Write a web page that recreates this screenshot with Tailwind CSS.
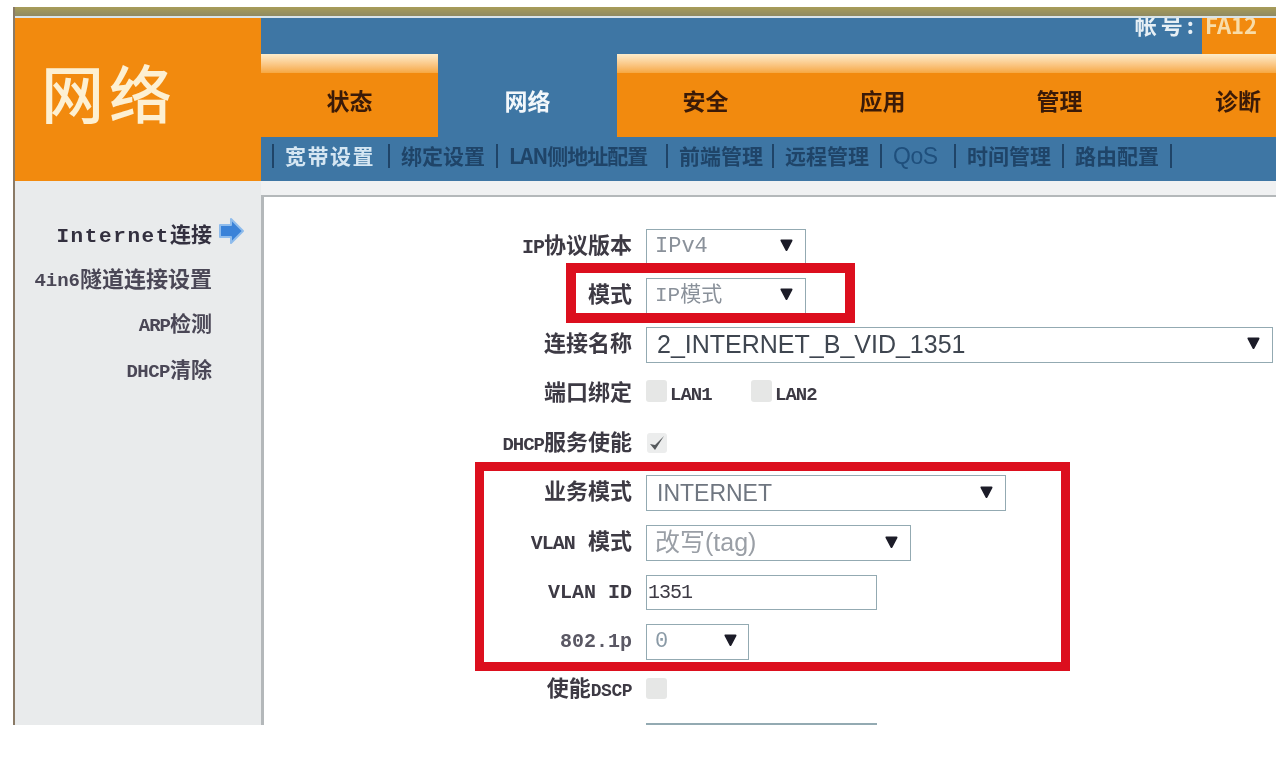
<!DOCTYPE html>
<html lang="zh">
<head>
  <meta charset="UTF-8" />
  <title>网络</title>
  <script src="https://cdn.jsdelivr.net/npm/@tailwindcss/browser@4"></script>
</head>
<body class="bg-white overflow-hidden font-['Liberation_Mono','Noto_Sans_CJK_SC',monospace]">
  <svg class="hidden">
    <symbol id="caret" viewBox="0 0 13 13"><path d="M1.5 2.5h10l-5 9.5z" fill="#1c1c28" stroke="#1c1c28" stroke-width="2" stroke-linejoin="round"/></symbol>
  </svg>
  <div class="relative w-[1280px] h-[780px] pt-[7px] pl-[13px] overflow-hidden">
    <div class="w-[1263px] h-[718px] flex flex-col border-l-2 border-[#8a7a66] blur-[0.6px]">
      <!-- top strip -->
      <div class="h-[9px] shrink-0 bg-linear-to-b from-[#a89c58] to-[#8f8a62]"></div>
      <div class="h-[2px] shrink-0 bg-[#d9e4ea]"></div>

      <!-- header -->
      <div class="h-[163px] shrink-0 flex">
        <div class="w-[246px] shrink-0 bg-[#f28a0e] flex items-center pl-[26px] pb-[18px]">
          <span class="text-[63px] leading-none tracking-[5px] font-medium text-[#fdf0d2] font-['Noto_Sans_CJK_SC',sans-serif]">网络</span>
        </div>
        <div class="flex-1 min-w-0 flex flex-col bg-[#3e76a4] overflow-hidden">
          <div class="h-[36px] shrink-0 flex justify-end overflow-hidden">
            <span class="text-[22px] leading-none font-bold tracking-[4px] text-[#e6eff5] mr-[4px] mt-[-5px] font-['Noto_Sans_CJK_SC',sans-serif]">帐号:</span>
            <div class="w-[74px] bg-[#f28a0e] pl-[3px] text-[22px] leading-none font-bold text-[#f8dca8] font-['Noto_Sans_CJK_SC',sans-serif]"><span class="block mt-[-5px]">FA12</span></div>
          </div>
          <div class="h-[83px] shrink-0 flex text-[23px] font-bold font-['Noto_Sans_CJK_SC',sans-serif]">
            <div class="w-[177px] shrink-0 flex flex-col bg-[#f28a0e]">
              <div class="h-[19px] bg-linear-to-b from-[#fdeccb] to-[#f6a840]"></div>
              <div class="flex-1 flex items-center justify-center pb-[10px] text-[#3a1a08]">状态</div>
            </div>
            <div class="w-[179px] shrink-0 flex flex-col">
              <div class="h-[19px]"></div>
              <div class="flex-1 flex items-center justify-center pb-[10px] text-[#f2f7fb]">网络</div>
            </div>
            <div class="flex-1 min-w-0 flex flex-col bg-[#f28a0e]">
              <div class="h-[19px] bg-linear-to-b from-[#fdeccb] to-[#f6a840]"></div>
              <div class="flex-1 flex items-center pb-[10px] text-[#3a1a08]">
                <span class="w-[177px] shrink-0 text-center">安全</span>
                <span class="w-[177px] shrink-0 text-center">应用</span>
                <span class="w-[177px] shrink-0 text-center">管理</span>
                <span class="w-[180px] shrink-0 text-center whitespace-nowrap">诊断</span>
              </div>
            </div>
          </div>
          <div class="flex-1 flex items-center pl-[11px] pb-[6px] gap-[11px] text-[21px] font-bold text-[#1f4468] whitespace-nowrap font-['Noto_Sans_CJK_SC',sans-serif]">
            <i class="w-[2px] h-[24px] bg-[#1f4468]"></i>
            <span class="text-[#d5e6f2] w-[92px] tracking-[1.5px]">宽带设置</span>
            <i class="w-[2px] h-[24px] bg-[#1f4468]"></i>
            <span class="w-[84px]">绑定设置</span>
            <i class="w-[2px] h-[24px] bg-[#1f4468]"></i>
            <span class="w-[146px] tracking-[-1px]">LAN侧地址配置</span>
            <i class="w-[2px] h-[24px] bg-[#1f4468]"></i>
            <span class="w-[82px]">前端管理</span>
            <i class="w-[2px] h-[24px] bg-[#1f4468]"></i>
            <span class="w-[84px]">远程管理</span>
            <i class="w-[2px] h-[24px] bg-[#1f4468]"></i>
            <span class="w-[50px] font-normal text-[23px] tracking-[-0.5px] text-[#1f4f7c] font-['Liberation_Sans',sans-serif]">QoS</span>
            <i class="w-[2px] h-[24px] bg-[#1f4468]"></i>
            <span class="w-[84px]">时间管理</span>
            <i class="w-[2px] h-[24px] bg-[#1f4468]"></i>
            <span class="w-[84px]">路由配置</span>
            <i class="w-[2px] h-[24px] bg-[#1f4468]"></i>
          </div>
        </div>
      </div>

      <!-- body -->
      <div class="flex-1 min-h-0 flex">
        <aside class="w-[246px] shrink-0 bg-[#e9ebec] pt-[36px] flex flex-col items-end pr-[49px] text-[21px] font-bold text-[#33303f] whitespace-nowrap">
          <div class="h-[40px] flex items-center relative">
            <span class="tracking-[1.6px]">Internet</span>连接
            <svg class="absolute left-full ml-[6px] top-[0px]" width="27" height="28" viewBox="0 0 27 28">
              <path d="M2 8h11V2l12 12-12 12v-6H2z" fill="#3a82d8" stroke="#8fbcec" stroke-width="2" stroke-linejoin="round"/>
            </svg>
          </div>
          <div class="h-[48px] flex items-center text-[22px] text-[#4a4756]"><span class="text-[19px]">4in6</span>隧道连接设置</div>
          <div class="h-[42px] flex items-center text-[#4a4756]"><span class="text-[19px] tracking-[-1px]">ARP</span>检测</div>
          <div class="h-[50px] flex items-center text-[#4a4756]"><span class="text-[19px] tracking-[-0.5px]">DHCP</span>清除</div>
        </aside>

        <main class="flex-1 min-w-0 flex flex-col bg-[#f0f1f2] overflow-hidden">
          <div class="h-[14px] shrink-0"></div>
          <div class="flex-1 min-h-0 bg-white border-t-[2px] border-l-[3px] border-[#b4b8ba] pt-[25px] pl-[368px] text-[22px] font-bold text-[#3d3a44]">

            <div class="h-[49px] flex items-center">
              <label class="w-[250px] -ml-[250px] mt-[2px] text-right"><span class="text-[20px] tracking-[-1px]">IP</span>协议版本</label>
              <div class="ml-[14px] w-[160px] h-[36px] border border-[#93aab2] flex items-center justify-between pl-[8px] pr-[12px] font-normal text-[#8a919a]"><span>IPv4</span><svg class="w-[13px] h-[13px] mb-[4px]"><use href="#caret"/></svg></div>
            </div>
            <div class="h-[49px] flex items-center">
              <label class="w-[250px] -ml-[250px] mt-[2px] text-right">模式</label>
              <div class="ml-[14px] w-[160px] h-[36px] border border-[#93aab2] flex items-center justify-between pl-[8px] pr-[12px] font-normal text-[21px] text-[#8a919a]"><span>IP模式</span><svg class="w-[13px] h-[13px] mb-[4px]"><use href="#caret"/></svg></div>
            </div>
            <div class="h-[49px] flex items-center">
              <label class="w-[250px] -ml-[250px] mt-[2px] text-right">连接名称</label>
              <div class="ml-[14px] w-[627px] h-[36px] border border-[#93aab2] flex items-center justify-between pl-[10px] pr-[12px] font-normal text-[25px] text-[#3f4650] font-['Liberation_Sans',sans-serif]"><span>2_INTERNET_B_VID_1351</span><svg class="w-[13px] h-[13px] mb-[4px]"><use href="#caret"/></svg></div>
            </div>
            <div class="h-[49px] flex items-center">
              <label class="w-[250px] -ml-[250px] mt-[2px] text-right">端口绑定</label>
              <div class="ml-[14px] flex items-center text-[19px]">
                <i class="w-[21px] h-[22px] rounded-[3px] bg-[#e6e7e6] mb-[6px]"></i>
                <span class="w-[84px] pl-[3px] mt-[4px] tracking-[-1px]">LAN1</span>
                <i class="w-[21px] h-[22px] rounded-[3px] bg-[#e6e7e6] mb-[6px]"></i>
                <span class="pl-[3px] mt-[4px] tracking-[-1px]">LAN2</span>
              </div>
            </div>
            <div class="h-[50px] flex items-center">
              <label class="w-[250px] -ml-[250px] mt-[2px] text-right whitespace-nowrap"><span class="text-[19px] tracking-[-1px]">DHCP</span>服务使能</label>
              <div class="ml-[15px] w-[20px] h-[20px] rounded-[3px] bg-[#eceded] flex items-center justify-center">
                <svg width="18" height="18" viewBox="0 0 18 18"><path d="M2 10l5 6 9-14-9 9z" fill="#55595c"/></svg>
              </div>
            </div>
            <div class="h-[50px] flex items-center">
              <label class="w-[250px] -ml-[250px] mt-[1px] text-right">业务模式</label>
              <div class="ml-[14px] w-[360px] h-[36px] border border-[#93aab2] flex items-center justify-between pl-[10px] pr-[12px] font-normal text-[23px] text-[#6f7680] font-['Liberation_Sans',sans-serif]"><span>INTERNET</span><svg class="w-[13px] h-[13px] mb-[4px]"><use href="#caret"/></svg></div>
            </div>
            <div class="h-[50px] flex items-center">
              <label class="w-[250px] -ml-[250px] mt-[1px] text-right"><span class="text-[20px] tracking-[-1px]">VLAN</span> 模式</label>
              <div class="ml-[14px] w-[265px] h-[36px] border border-[#93aab2] flex items-center justify-between pl-[8px] pr-[12px] font-normal text-[25px] text-[#9a9fa6] font-['Liberation_Sans','Noto_Sans_CJK_SC',sans-serif]"><span>改写(tag)</span><svg class="w-[13px] h-[13px] mb-[4px]"><use href="#caret"/></svg></div>
            </div>
            <div class="h-[49px] flex items-center">
              <label class="w-[250px] -ml-[250px] text-[20px] text-right">VLAN ID</label>
              <div class="ml-[14px] w-[231px] h-[35px] border border-[#93aab2] flex items-center pl-[1px] text-[20px] text-[#3d3a44] font-normal"><span class="tracking-[-1px]">1351</span></div>
            </div>
            <div class="h-[49px] flex items-center">
              <label class="w-[250px] -ml-[250px] text-[20px] text-right text-[#5a5864]">802.1p</label>
              <div class="ml-[14px] w-[103px] h-[36px] border border-[#93aab2] flex items-center justify-between pl-[8px] pr-[11px] font-normal text-[#8a9aa6]"><span>0</span><svg class="w-[13px] h-[13px] mb-[4px]"><use href="#caret"/></svg></div>
            </div>
            <div class="h-[49px] flex items-center">
              <label class="w-[250px] -ml-[250px] text-right">使能<span class="text-[18px] tracking-[-0.5px]">DSCP</span></label>
              <i class="ml-[14px] w-[21px] h-[21px] rounded-[3px] bg-[#e6e7e6] mb-[4px]"></i>
            </div>
            <div class="ml-[14px] w-[231px] h-[2px] mt-[8px] bg-[#93aab2]"></div>
          </div>
        </main>
      </div>
    </div>

    <!-- red callouts drawn over the shot -->
    <div class="absolute left-[566px] top-[263px] w-[289px] h-[60px] border-[10px] border-[#dc0f1e]"></div>
    <div class="absolute left-[475px] top-[462px] w-[595px] h-[209px] border-[9px] border-[#dc0f1e]"></div>
  </div>
</body>
</html>
